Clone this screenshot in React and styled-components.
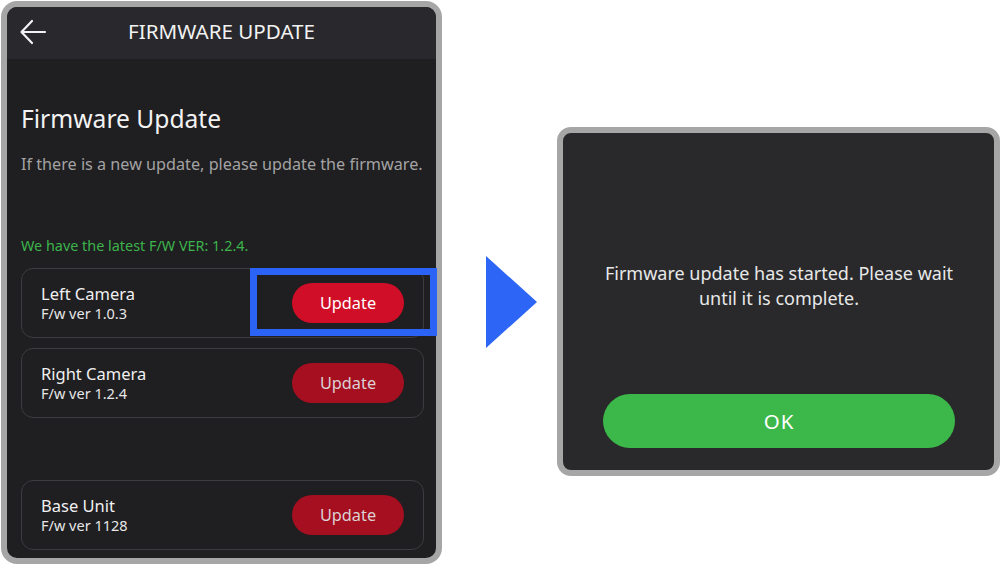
import React from "react";
import styled, { createGlobalStyle } from "styled-components";

const GlobalStyle = createGlobalStyle`
  html, body {
    margin: 0;
    padding: 0;
    background: #ffffff;
    font-family: "Noto Sans", "Open Sans", sans-serif;
  }
`;

const Page = styled.div`
  display: flex;
  align-items: flex-start;
  width: 1000px;
  height: 566px;
  overflow: hidden;
`;

const Phone = styled.div`
  margin: 1px 0 0 1px;
  width: 441px;
  height: 563px;
  box-sizing: border-box;
  border: 6px solid #a6a6a6;
  border-radius: 16px;
  background: #1f1e21;
  display: flex;
  flex-direction: column;
`;

const Header = styled.div`
  height: 52px;
  flex-shrink: 0;
  box-sizing: border-box;
  padding-bottom: 4px;
  background: #29282c;
  border-radius: 10px 10px 0 0;
  display: flex;
  align-items: center;
  justify-content: center;
  position: relative;
  color: #f2f2f2;
  font-size: 20.6px;
`;

const BackButton = styled.button`
  position: absolute;
  left: 12px;
  top: 12px;
  background: none;
  border: none;
  padding: 0;
  display: flex;
`;

const Body = styled.div`
  padding: 44px 12px 0 14px;
  display: flex;
  flex-direction: column;
`;

const Title = styled.div`
  color: #f2f2f2;
  font-size: 24.6px;
  line-height: 32px;
`;

const Subtitle = styled.div`
  margin-top: 18px;
  color: #a3a3a3;
  font-size: 16.2px;
  line-height: 22px;
`;

const Latest = styled.div`
  margin-top: 62px;
  color: #3cb44b;
  font-size: 14.4px;
  line-height: 18px;
`;

const Card = styled.div`
  position: relative;
  margin-top: ${p => p.$gap}px;
  height: 70px;
  box-sizing: border-box;
  border: 1.5px solid #3c3b3f;
  border-radius: 12px;
  display: flex;
  align-items: center;
  justify-content: space-between;
  padding: 0 19px 0 19px;
`;

const Info = styled.div`
  display: flex;
  flex-direction: column;
`;

const Name = styled.div`
  color: #f0f0f0;
  font-size: 16.5px;
  line-height: 21px;
`;

const Version = styled.div`
  color: #e6e6e6;
  font-size: 14.5px;
  line-height: 19px;
`;

const UpdateButton = styled.button`
  width: 112px;
  height: 40px;
  border: none;
  border-radius: 20px;
  background: ${p => (p.$active ? "#d10e27" : "#a50f20")};
  color: ${p => (p.$active ? "#ffffff" : "#dcd2d3")};
  font-family: inherit;
  font-size: 16.3px;
`;

const Highlight = styled.div`
  position: absolute;
  left: 228px;
  top: -1.5px;
  width: 187px;
  height: 68px;
  box-sizing: border-box;
  border: 7px solid #2b63f6;
  pointer-events: none;
`;

const Arrow = styled.div`
  margin: 256px 0 0 44px;
  width: 0;
  height: 0;
  border-top: 46px solid transparent;
  border-bottom: 46px solid transparent;
  border-left: 51px solid #2d65f6;
`;

const Dialog = styled.div`
  margin: 127px 0 0 20px;
  width: 443px;
  height: 349px;
  box-sizing: border-box;
  border: 6px solid #a6a6a6;
  border-radius: 14px;
  background: #29282b;
  display: flex;
  flex-direction: column;
  align-items: center;
  padding: 128px 39px 22px 40px;
`;

const Message = styled.div`
  color: #e8e8e8;
  font-size: 18px;
  line-height: 25px;
  text-align: center;
  width: 360px;
`;

const OkButton = styled.button`
  margin-top: auto;
  width: 100%;
  height: 54px;
  border: none;
  border-radius: 27px;
  background: #3cb84a;
  color: #ffffff;
  font-family: inherit;
  font-size: 20.5px;
  letter-spacing: 1px;
`;

const devices = [
  { name: "Left Camera", ver: "1.0.3", gap: 13, active: true },
  { name: "Right Camera", ver: "1.2.4", gap: 10 },
  { name: "Base Unit", ver: "1128", gap: 62 },
];

const App = () => (
  <>
    <GlobalStyle />
    <Page>
      <Phone>
        <Header>
          <BackButton>
            <svg width="28" height="26" viewBox="0 0 28 26" fill="none">
              <path d="M3 13H26M13 2L2.5 13L13 24" stroke="#f2f2f2" strokeWidth="2.2" strokeLinecap="round" strokeLinejoin="round" />
            </svg>
          </BackButton>
          FIRMWARE UPDATE
        </Header>
        <Body>
          <Title>Firmware Update</Title>
          <Subtitle>If there is a new update, please update the firmware.</Subtitle>
          <Latest>We have the latest F/W VER: 1.2.4.</Latest>
          {devices.map(d => (
            <Card key={d.name} $gap={d.gap}>
              <Info>
                <Name>{d.name}</Name>
                <Version>F/w ver {d.ver}</Version>
              </Info>
              <UpdateButton $active={d.active}>Update</UpdateButton>
              {d.active && <Highlight />}
            </Card>
          ))}
        </Body>
      </Phone>
      <Arrow />
      <Dialog>
        <Message>Firmware update has started. Please wait until it is complete.</Message>
        <OkButton>OK</OkButton>
      </Dialog>
    </Page>
  </>
);

export default App;
